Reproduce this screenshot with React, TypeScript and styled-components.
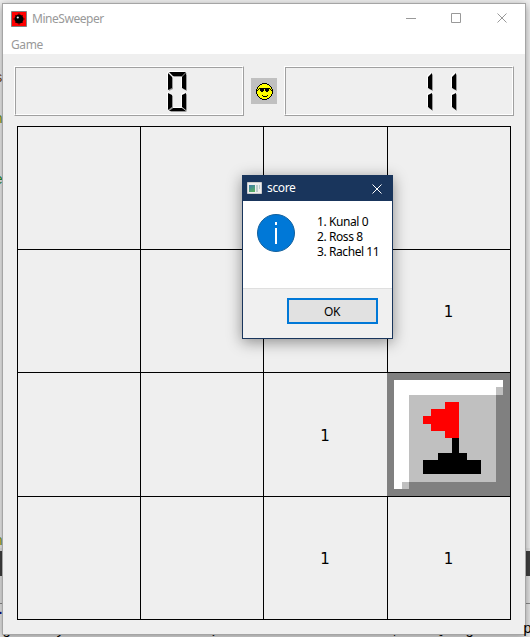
import React from "react";
import styled, { createGlobalStyle } from "styled-components";

const Global = createGlobalStyle`
  *{box-sizing:border-box}
  html,body{margin:0;padding:0;overflow:hidden}
  body{font-family:"Noto Sans","Open Sans",sans-serif;font-size:12px;color:#000}
`;

const Desktop = styled.div`
  position:relative;width:530px;height:637px;padding:3px 4px 2px 2px;overflow:hidden;
  background:linear-gradient(#efefef 0 548px,#e4e4e4 548px 603px,#8a8a8a 603px 604px,#e8e8e8 604px);
`;
const DarkBand = styled.div`
  position:absolute;left:0;right:0;top:551px;height:25px;background:#404040;
`;
const Fragment = styled.span<{ $x: number; $y: number; $c: string }>`
  position:absolute;left:${p => p.$x}px;top:${p => p.$y}px;color:${p => p.$c};
  font:15px/18px "Liberation Mono",monospace;white-space:pre;
`;
/* Sliver of the editor line that shows under the window's bottom edge. */
const Strip = styled.div`
  position:absolute;left:0;right:0;bottom:0;height:2px;overflow:hidden;
`;
const Window = styled.main`
  position:relative;width:524px;height:632px;border:1px solid #a5a5a5;background:#efefef;
  box-shadow:0 2px 8px rgba(0,0,0,.38);display:flex;flex-direction:column;
`;
const TitleBar = styled.header`
  height:30px;background:#fff;display:flex;align-items:center;padding-left:8px;color:#999;flex:none;
`;
const Title = styled.span`
  margin-left:5px;flex:1;line-height:16px;letter-spacing:-.45px;padding-bottom:1px;
`;
const Controls = styled.div`
  display:flex;width:138px;margin-right:3px;
`;
const MenuBar = styled.nav`
  height:20px;background:#fff;color:#999;padding:2px 8px;line-height:18px;flex:none;letter-spacing:-.4px;
`;
const Status = styled.section`
  display:flex;align-items:center;padding:12px 11px 0;height:62px;justify-content:space-between;flex:none;
`;
const Lcd = styled.div`
  width:230px;height:50px;border:1px solid;border-color:#fff #a0a0a0 #a0a0a0 #fff;
`;
const LcdInner = styled.div`
  width:100%;height:100%;border:1px solid;border-color:#a0a0a0 #fff #fff #a0a0a0;
`;
const Face = styled.button`
  width:26px;height:26px;padding:0;border:0;background:#c0c0c0;display:block;
`;
const Board = styled.section`
  margin:10px 0 0 14px;width:494px;height:494px;display:grid;
  grid-template-columns:123px 123px 124px 124px;grid-template-rows:123px 123px 124px 124px;
`;
const Cell = styled.div<{ $lastCol?: boolean; $lastRow?: boolean; $flag?: boolean }>`
  border-left:${p => (p.$flag ? "0" : "1px solid #000")};border-top:1px solid #000;
  border-right:${p => (p.$lastCol ? "1px solid #000" : "0")};
  border-bottom:${p => (p.$lastRow ? "1px solid #000" : "0")};
  display:flex;align-items:center;justify-content:center;
`;
const Count = styled.span`
  font:15px/18px "DejaVu Sans",sans-serif;padding:2px 1px 0 0;
`;
const Dialog = styled.section`
  position:absolute;left:242px;top:175px;width:151px;height:164px;border:1px solid #19355c;
  background:#fff;box-shadow:0 3px 14px rgba(0,0,0,.42);display:flex;flex-direction:column;
`;
const DialogTitle = styled.header`
  height:25px;background:#19355c;color:#fff;display:flex;align-items:center;padding:0 9px 0 4px;flex:none;
`;
const DialogName = styled.span`
  flex:1;margin-left:5px;line-height:16px;letter-spacing:-.35px;padding-bottom:1px;
`;
const DialogBody = styled.div`
  flex:1;display:flex;padding:13px 0 0 14px;
`;
const Scores = styled.div`
  margin:0 0 0 22px;line-height:15px;white-space:nowrap;letter-spacing:-.42px;
`;
const DialogFooter = styled.footer`
  height:50px;border-top:1px solid #dfdfdf;background:#f0f0f0;padding:9px 14px 0;display:flex;justify-content:flex-end;flex:none;
`;
const OkButton = styled.button`
  width:91px;height:26px;border:2px solid #0078d7;background:#e1e1e1;font:12px "Noto Sans",sans-serif;
  letter-spacing:-.4px;padding:0 1px 0 0;color:#000;
`;

const segments: Record<string, string> = {
  top: "M1 0H18L14 4H5Z",
  bottom: "M5 36H14L18 39H1Z",
  upperLeft: "M0 1L4 5V16L0 18Z",
  upperRight: "M18 1V18L14 16V5Z",
  lowerLeft: "M0 21L4 23V35L0 38Z",
  lowerRight: "M18 21V38L14 35V23Z",
};

function Digit({ x, value }: { x: number; value: number }) {
  const lit = value === 0 ? Object.keys(segments) : ["upperRight", "lowerRight"];
  return (
    <g transform={`translate(${x} 4)`}>
      {lit.map(k => <path key={k} d={segments[k]} fill="#fff" transform="translate(-1 -1)" />)}
      {lit.map(k => <path key={k} d={segments[k]} fill="#999" transform="translate(1 1)" />)}
      {lit.map(k => <path key={k} d={segments[k]} fill="#000" />)}
    </g>
  );
}

function Counter({ value }: { value: string }) {
  return (
    <Lcd><LcdInner>
      <svg width="226" height="46" display="block">
        {value.split("").map((d, i) => <Digit key={i} x={152 - (value.length - 1 - i) * 24} value={+d} />)}
      </svg>
    </LcdInner></Lcd>
  );
}

const Mine = () => (
  <svg width="16" height="16" viewBox="0 0 16 16">
    <path fill="#f00" stroke="#808080" d="M.5.5h15v15H.5z" />
    <path stroke="#700" strokeWidth="1" d="M8 2v12M2 8h12M4 4l8 8M12 4l-8 8" />
    <circle cx="8" cy="8" r="4.5" />
    <circle cx="6.8" cy="6.5" r="1.1" fill="#eee" />
  </svg>
);

const Smile = () => (
  <svg width="26" height="26" shapeRendering="crispEdges">
    <path d="M11 5h5v1h2v1h1v1h1v1h1v2h1v5h-1v2h-1v1h-1v1h-1v1h-2v1h-5v-1H9v-1H8v-1H7v-1H6v-2H5v-5h1V9h1V8h1V7h1V6h2z" />
    <path fill="#ff0" d="M11 6h5v1h2v1h1v1h1v2h1v5h-1v2h-1v1h-1v1h-2v1h-5v-1H9v-1H8v-1H7v-2H6v-5h1V9h1V8h1V7h2z" />
    <path d="M8 10h11v1h1v1h1v1h-1v-1h-1v-1h-1v2h-1v1h-2v-1h-1v-2h-1v2h-1v1h-2v-1H9v-2H8v1H7v1H6v-1h1v-1h1zM11 17h1v1h-1zM12 18h4v1h-4zM16 17h1v1h-1z" />
  </svg>
);

const Flag = () => (
  <svg width="123" height="123" shapeRendering="crispEdges">
    <path fill="#808080" d="M0 0h123v123H0z" />
    <path fill="#fff" d="M7 7h109v7h-7v8H22v87h-7v7H7z" />
    <path fill="silver" d="M22 22h87v87H22zM109 14h7v8h-7zM15 109h7v7h-7z" />
    <path fill="red" d="M58 29h14v36H58v-7H44v-7h-8v-8h8v-7h14z" />
    <path d="M65 65h7v15h8v7h14v14H36V87h15v-7h14z" />
  </svg>
);

const Info = () => (
  <svg width="38" height="38" viewBox="0 0 38 38">
    <circle cx="19" cy="19" r="18.5" fill="#0078d7" stroke="#12609d" />
    <path fill="#fff" d="M18 8h2v3h-2zM18 14h2v16h-2z" />
  </svg>
);

const AppIcon = () => (
  <svg width="15" height="13">
    <defs><linearGradient id="pane" x2=".5" y2="1"><stop stopColor="#3b79aa" /><stop offset="1" stopColor="#55ad65" /></linearGradient></defs>
    <path fill="#eee" stroke="#ccc" d="M.5.5h14v11H.5z" />
    <path fill="url(#pane)" d="M2 3h6v7H2z" /><path fill="#bcc" d="M9 3h2v7H9zM12 3h1v4h-1z" />
  </svg>
);

export default function App() {
  return (
    <Desktop>
      <Global />
      <DarkBand />
      <Fragment $x={-6} $y={70} $c="#764b20">s</Fragment>
      <Fragment $x={-6} $y={111} $c="#759718">h</Fragment>
      <Fragment $x={-6} $y={172} $c="#278c36">e</Fragment>
      <Fragment $x={-6} $y={533} $c="#759718">n</Fragment>
      <Fragment $x={-4} $y={602} $c="#000080">.</Fragment>
      <Window>
        <TitleBar>
          <Mine /><Title>MineSweeper</Title>
          <Controls>
            <svg width="138" height="30" fill="none" stroke="#999">
              <path d="M22 14.5h10M67.5 9.5h9v9h-9zM113.5 9.5l9 9m0-9l-9 9" />
            </svg>
          </Controls>
        </TitleBar>
        <MenuBar>Game</MenuBar>
        <Status><Counter value="0" /><Face><Smile /></Face><Counter value="11" /></Status>
        <Board>
          {Array.from({ length: 16 }, (_, i) => (
            <Cell key={i} $lastCol={i % 4 === 3} $lastRow={i > 11} $flag={i === 11}>
              {i === 11 ? <Flag /> : [7, 10, 14, 15].includes(i) && <Count>1</Count>}
            </Cell>
          ))}
        </Board>
      </Window>
      <Strip>
        <Fragment $x={2} $y={-13} $c="#000">{"g     y"}</Fragment>
        <Fragment $x={208} $y={-14} $c="#000">(</Fragment>
        <Fragment $x={392} $y={-14} $c="#000">,</Fragment>
        <Fragment $x={434} $y={-14} $c="#000">Q</Fragment>
        <Fragment $x={465} $y={-13} $c="#000">g</Fragment>
      </Strip>
      <Fragment $x={523} $y={621} $c="#000">p</Fragment>
      <Dialog>
        <DialogTitle>
          <AppIcon /><DialogName>score</DialogName>
          <svg width="12" height="12" stroke="#fff"><path d="M1.5 1.5l9 9m0-9l-9 9" /></svg>
        </DialogTitle>
        <DialogBody>
          <Info />
          <Scores>1. Kunal 0<br />2. Ross 8<br />3. Rachel 11</Scores>
        </DialogBody>
        <DialogFooter><OkButton>OK</OkButton></DialogFooter>
      </Dialog>
    </Desktop>
  );
}
